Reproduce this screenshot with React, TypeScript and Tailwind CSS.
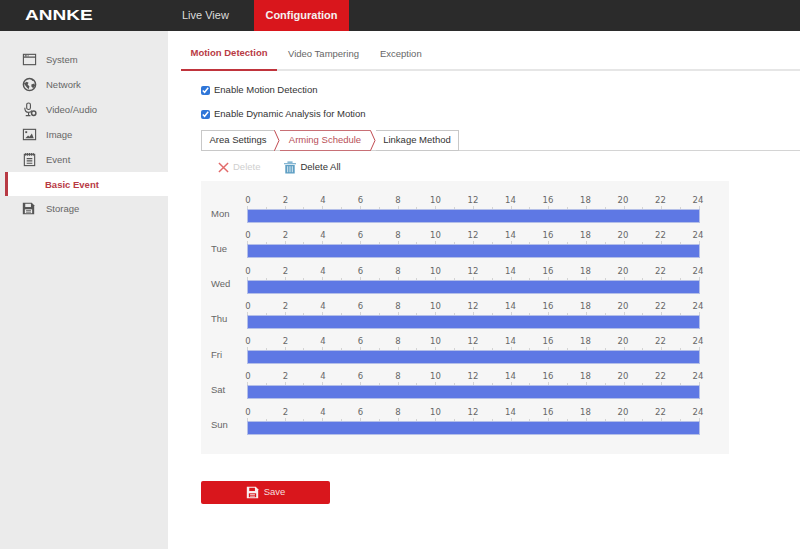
import React from "react";

const days = ["Mon", "Tue", "Wed", "Thu", "Fri", "Sat", "Sun"];
const hours = Array.from({ length: 13 }, (_, i) => i * 2);
const ticks = Array.from({ length: 25 }, (_, i) => i);

const I = ({ children, className = "" }: { children: React.ReactNode; className?: string }) => (
  <svg viewBox="0 0 16 16" className={`w-[15px] h-[15px] shrink-0 ${className}`} fill="none" stroke="#555" strokeWidth="1.2">
    {children}
  </svg>
);

const SaveGlyph = ({ color, bg }: { color: string; bg: string }) => (
  <svg viewBox="0 0 16 16" className="w-[13px] h-[13px] shrink-0">
    <path d="M1 1h11l3 3v11H1z" fill={color} />
    <rect x="4" y="2.200" width="7" height="4" fill={bg} />
    <rect x="3.500" y="9" width="9" height="4.800" fill={bg} />
    <rect x="5" y="10.200" width="6" height="1" fill={color} />
    <rect x="5" y="12" width="6" height="1" fill={color} />
  </svg>
);

const items: [string, React.ReactNode][] = [
  ["System", <I><rect x="1.500" y="2.500" width="13" height="11" /><path d="M1.500 5.500h13M3 4h2M6 4h1" /></I>],
  ["Network", <I><circle cx="8" cy="8" r="6.500" strokeWidth="1.600" /><path d="M2 7l3-2 2 1-1 2 2 2-1 3-2-2zM9 2l2 2 3 0M10 8l3-1 1 2-2 3-2-2z" fill="#555" stroke="none" /></I>],
  ["Video/Audio", <I><rect x="5" y="1" width="4" height="7" rx="2" /><path d="M3 6c0 4 2 5 4 5s3-1 3.500-2M7 11v3M4 14.500h5" /><circle cx="12.500" cy="12" r="2.300" strokeWidth="1.600" /></I>],
  ["Image", <I><rect x="1.500" y="2.500" width="13" height="11" /><path d="M3.500 12l3-3 1.500 1.500 2.500-3.500 2 5z" fill="#555" stroke="none" /><rect x="3.500" y="4.500" width="2" height="2" fill="#555" stroke="none" /></I>],
  ["Event", <I><rect x="2.500" y="2.500" width="11" height="12" /><path d="M4 1v3M6 1v3M8 1v3M10 1v3M12 1v3M5 7h6M5 9.500h6M5 12h6" /></I>],
];

export default function App() {
  return (
    <div className="w-[800px] h-[549px] overflow-hidden bg-white flex flex-col text-[9.5px] text-[#333]" style={{ fontFamily: '"Liberation Sans", Arial, sans-serif' }}>
      <header className="h-[31px] shrink-0 bg-[#2b2b2b] flex">
        <div className="w-[182px] pl-[25px] flex items-center">
          <span className="text-white font-bold text-[15px] scale-x-[1.27] origin-left">ANNKE</span>
        </div>
        <div className="w-[72px] flex items-center text-[#dddddd] text-[11px]">Live View</div>
        <div className="w-[95px] bg-[#d9161c] text-[#f5f0f0] font-bold text-[11px] flex items-center justify-center">Configuration</div>
      </header>
      <div className="flex flex-1 min-h-0">
        <aside className="w-[168px] shrink-0 bg-[#ebebeb] pt-[16px] text-[#666]">
          {items.map(([name, icon]) => (
            <div key={name} className="h-[25px] flex items-center pl-[22px] gap-[9px]">
              {icon}
              <span className="pt-[2px]">{name}</span>
            </div>
          ))}
          <div className="ml-[5px] h-[24px] bg-white border-l-[3px] border-[#b83a44] pl-[37px] pt-[2px] flex items-center font-bold text-[#b83a44]">Basic Event</div>
          <div className="h-[25px] flex items-center pl-[22px] gap-[9px]">
            <SaveGlyph color="#555" bg="#ebebeb" />
            <span className="ml-[2px] pt-[2px]">Storage</span>
          </div>
        </aside>
        <main className="flex-1 min-w-0 pl-[13px]">
          <div className="h-[40px] flex border-b-2 border-[#e6e6e6] items-stretch">
            <div className="w-[96px] -mb-[2px] border-b-2 border-[#c0343c] flex items-center justify-center font-bold text-[#b83a44] pt-[7px]">Motion Detection</div>
            <div className="ml-[11px] flex items-center text-[#666] pt-[9px]">Video Tampering</div>
            <div className="ml-[21px] flex items-center text-[#666] pt-[9px]">Exception</div>
          </div>
          <label className="mt-[12px] ml-[20px] h-[14px] flex items-center gap-[4px]">
            <input type="checkbox" defaultChecked readOnly className="w-[9px] h-[9px] accent-[#2f76d8] m-0" />
            <span>Enable Motion Detection</span>
          </label>
          <label className="mt-[10px] ml-[20px] h-[14px] flex items-center gap-[4px]">
            <input type="checkbox" defaultChecked readOnly className="w-[9px] h-[9px] accent-[#2f76d8] m-0" />
            <span>Enable Dynamic Analysis for Motion</span>
          </label>
          <div className="mt-[9px] ml-[20px] h-[21px] flex border-b border-[#d4d4d4]">
            <div className="h-[21px] w-[73px] border border-r-0 border-[#c8c8c8] flex items-center justify-center">Area Settings</div>
            <svg viewBox="0 0 6 21" className="w-[6px] h-[21px] shrink-0" fill="none"><path d="M0 .5h.5L5 10.500.5 20.500H0" stroke="#c04a50" /></svg>
            <div className="h-[21px] w-[90px] border-y border-[#c87076] flex items-center justify-center text-[#b85058]">Arming Schedule</div>
            <svg viewBox="0 0 6 21" className="w-[6px] h-[21px] shrink-0" fill="none"><path d="M0 .5h.5L5 10.500.5 20.500H0" stroke="#c04a50" /></svg>
            <div className="h-[21px] w-[83px] border border-l-0 border-[#c8c8c8] flex items-center justify-center">Linkage Method</div>
          </div>
          <div className="mt-[8px] ml-[37px] h-[16px] flex items-center">
            <svg viewBox="0 0 12 12" className="w-[11px] h-[11px]" fill="none" stroke="#e26a6a" strokeWidth="1.600"><path d="M1 1l10 10M11 1L1 11" /></svg>
            <span className="ml-[4px] text-[#cfcfcf]">Delete</span>
            <svg viewBox="0 0 14 14" className="ml-[24px] w-[12px] h-[13px]" fill="#5f9fc4" stroke="none"><path d="M0 2h14v1.200H0zM4 0h6v1.500H4zM1.500 4h11v10h-11z" /><path d="M4.300 5.500v7M7 5.500v7M9.700 5.500v7" stroke="#fff" strokeWidth=".9" /></svg>
            <span className="ml-[4px]">Delete All</span>
          </div>
          <div className="mt-[6px] ml-[20px] w-[528px] h-[273px] bg-[#f6f6f6] pt-[13px] flex flex-col">
            {days.map((d) => (
              <div key={d} className="h-[35.25px] shrink-0 flex">
                <div className="w-[46px] pl-[10px] pt-[12.500px] text-[#666] leading-[13px]">{d}</div>
                <div className="w-[453px] flex flex-col">
                  <div className="h-[12px] pl-[1px] pr-[2px] flex justify-between text-[8.500px] leading-[12px] text-[#666]" style={{ fontFamily: '"DejaVu Sans", sans-serif' }}>
                    {hours.map((h) => (
                      <div key={h} className="w-0 flex justify-center"><span>{h}</span></div>
                    ))}
                  </div>
                  <div className="h-[3px] flex justify-between items-end">
                    {ticks.map((t) => (
                      <div key={t} className={`w-px ${t % 2 ? "h-[2px]" : "h-[3px]"} bg-[#d4d4d4]`} />
                    ))}
                  </div>
                  <div className="h-[14px] bg-[#5e78e4] border border-[#b4bfe8]" />
                </div>
              </div>
            ))}
          </div>
          <button className="mt-[27px] ml-[20px] w-[129px] h-[23px] bg-[#d9161c] rounded-[2px] text-[#f4dede] flex items-center justify-center gap-[5px]">
            <SaveGlyph color="#f8eeee" bg="#d9161c" />
            <span>Save</span>
          </button>
        </main>
      </div>
    </div>
  );
}
